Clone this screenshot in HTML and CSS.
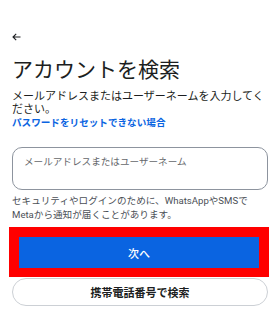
FILE: index.html
```html
<!DOCTYPE html>
<html>
<head>
  <title>アカウントを検索</title>
  <link rel="stylesheet" href="styles.css">
</head>
<body>
  <div class="back">
    <svg width="9" height="8" viewBox="0 0 9 8"><path d="M8.5 4H1M4.2 0.8L1 4l3.2 3.2" fill="none" stroke="#1c1e21" stroke-width="1.1"/></svg>
  </div>

  <h1>アカウントを検索</h1>
  <p class="desc">メールアドレスまたはユーザーネームを入力してください。</p>
  <a class="link" href="#">パスワードをリセットできない場合</a>

  <div class="field">メールアドレスまたはユーザーネーム</div>

  <p class="note">セキュリティやログインのために、WhatsAppやSMSでMetaから通知が届くことがあります。</p>

  <div class="mark">
    <button class="primary">次へ</button>
  </div>
  <button class="secondary">携帯電話番号で検索</button>
</body>
</html>
```

FILE: styles.css
```css
body { margin: 0; padding: 0 12px; background: #fff; font-family: Roboto, "Noto Sans CJK JP", sans-serif; color: #1c1e21; }
.back { height: 8px; padding-top: 33px; }
.back svg { display: block; }
h1 { margin: 15px 0 0; font-size: 21px; line-height: 28px; font-weight: 400; }
.desc { margin: 6px 0 0; font-size: 11px; line-height: 13px; }
.link { display: block; font-size: 9.6px; line-height: 13px; font-weight: 700; color: #0a64e1; text-decoration: none; }
.field { margin-top: 18px; height: 34px; padding: 7px 11px 0; border: 1px solid #8d949e; border-radius: 10px; font-size: 9.6px; line-height: 13px; color: #65676b; }
.note { margin: 4px 0 0; font-size: 9.6px; line-height: 14px; color: #4b4f56; }
.mark { margin: 5px -1px 0 -3px; border: 10px solid #ff0000; border-bottom-width: 9px; }
.primary { display: block; width: 100%; height: 31px; border: none; background: #0a64e1; color: #fff; font-family: inherit; font-size: 11px; font-weight: 500; }
.secondary { display: block; width: 100%; margin-top: 1px; height: 28px; border: 1px solid #ccd0d5; border-radius: 14px; background: #fff; color: #1c1e21; font-family: inherit; font-size: 11px; font-weight: 700; }
```
